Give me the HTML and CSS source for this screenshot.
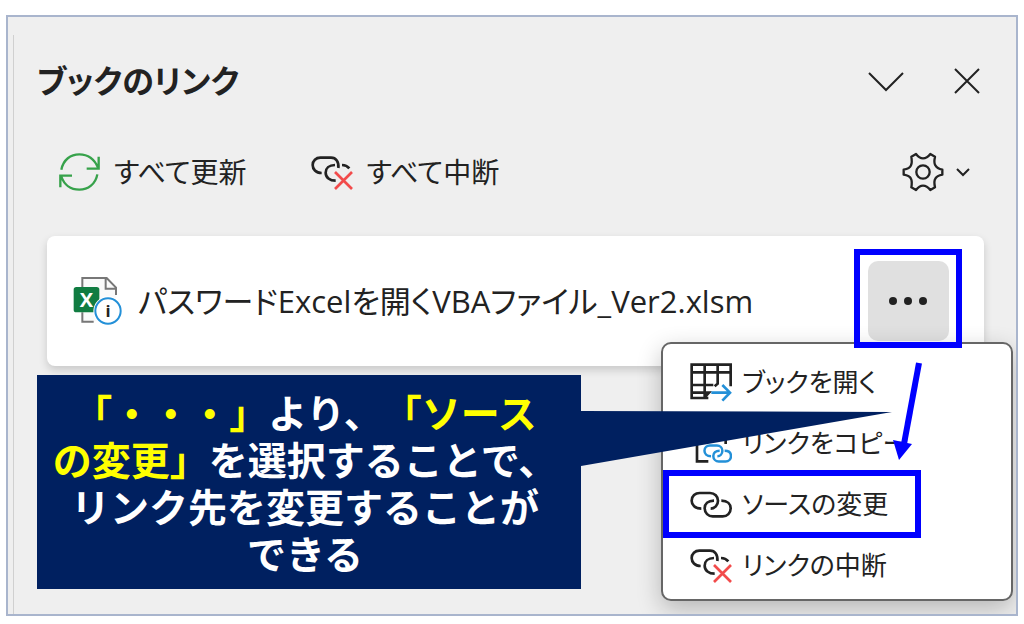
FILE: index.html
```html
<!DOCTYPE html>
<html lang="ja">
<head>
  <meta charset="utf-8">
  <meta name="viewport" content="width=device-width">
  <title>ブックのリンク</title>
  <link rel="stylesheet" href="styles.css">
</head>
<body>
<svg class="defs" aria-hidden="true">
  <symbol id="link-broken" viewBox="36 82 126 105">
    <path d="M68 136 C50 136 41 124 41 112 C41 99 51 90 64 90 H96 C111 90 120 102 118 121" fill="none" stroke="#222" stroke-width="8"/>
    <path d="M108 112 C90 112 80 122 80 135 C80 149 92 159 110 159" fill="none" stroke="#222" stroke-width="8"/>
    <path d="M129 112 Q143 112 151 122" fill="none" stroke="#222" stroke-width="8"/>
    <path d="M108 133 L159 184 M159 133 L108 184" fill="none" stroke="#f24b4b" stroke-width="8"/>
  </symbol>
  <g id="chain">
    <path d="M184 257 C165 257 155 246 155 233 C155 219 166 210 179 210 H210 C224 210 234 220 234 233 C234 247 224 257 212 257"/>
    <path d="M222 233 C204 233 194 243 194 256 C194 270 205 280 218 280 H248 C262 280 272 270 272 256 C272 243 263 233 244 233"/>
  </g>
</svg>

<div class="frame">
  <div class="pane">
    <header class="pane-head">
      <h1>ブックのリンク</h1>
      <button class="icon-btn" type="button" aria-label="折りたたむ">
        <svg width="36" height="36" viewBox="0 0 36 36"><path d="M1 10 L18 27 L35 10" fill="none" stroke="#222" stroke-width="2"/></svg>
      </button>
      <button class="icon-btn" type="button" aria-label="閉じる">
        <svg width="26" height="26" viewBox="0 0 26 26"><path d="M1 1 L25 25 M25 1 L1 25" fill="none" stroke="#222" stroke-width="2"/></svg>
      </button>
    </header>

    <div class="toolbar">
      <button class="tool" type="button">
        <svg width="42" height="40" viewBox="174 454 126 120">
          <path d="M184 507 C190 477 212 461 238 461 C266 461 284 477 294 501 M296 468 V504 H260" fill="none" stroke="#37a24b" stroke-width="7"/>
          <path d="M292 521 C287 550 264 567 238 567 C211 567 192 551 184 528 M181 560 V525 H216" fill="none" stroke="#37a24b" stroke-width="7"/>
        </svg>
        すべて更新
      </button>
      <button class="tool" type="button">
        <svg width="42" height="35"><use href="#link-broken"/></svg>
        すべて中断
      </button>
      <button class="tool settings" type="button" aria-label="設定">
        <svg width="42" height="40" viewBox="188 304 126 120">
          <path d="M193 357 Q211 354 215 344 Q219 336 216 318 L230 310 Q240 323 251 323 Q263 323 273 310 L287 318 Q283 336 288 344 Q293 354 309 357 V372 Q293 375 288 384 Q283 392 287 410 L273 418 Q263 405 251 405 Q240 405 230 418 L216 410 Q219 392 215 384 Q211 375 193 372 Z" fill="none" stroke="#222" stroke-width="7" stroke-linejoin="round"/>
          <circle cx="251" cy="364" r="20" fill="none" stroke="#222" stroke-width="7"/>
        </svg>
        <svg width="14" height="10" viewBox="0 0 14 10"><path d="M1 2 L7 8 L13 2" fill="none" stroke="#222" stroke-width="2"/></svg>
      </button>
    </div>

    <div class="card">
      <svg width="49" height="50" viewBox="100 141 147 150">
        <path d="M128 280 V147 H201 L229 176 V245 L162 280 Z" fill="#fafafa"/>
        <path d="M128 175 V147 H201 L229 176 V198 M198 147 V179 H229 M128 250 V278 H162" fill="none" stroke="#777" stroke-width="6"/>
        <rect x="102" y="174" width="77" height="76" rx="8" fill="#107c41"/>
        <text x="140" y="235" class="xl">X</text>
        <circle cx="205" cy="246" r="44" fill="#fff"/>
        <circle cx="205" cy="246" r="38" fill="#fff" stroke="#2390d8" stroke-width="6"/>
        <text x="205" y="264" class="info">i</text>
      </svg>
      <span class="file">パスワードExcelを開くVBAファイル_Ver2.xlsm</span>
      <div class="more-wrap">
        <button class="more" type="button" aria-label="その他のオプション">
          <svg width="40" height="8" viewBox="0 0 40 8"><circle cx="4" cy="4" r="4"/><circle cx="19" cy="4" r="4"/><circle cx="34" cy="4" r="4"/></svg>
        </button>
        <div class="menu">
          <button class="item" type="button">
            <svg width="42" height="39" viewBox="150 368 126 117">
              <path d="M205 473 H155 V373 H272 V438 M155 396 H272 M194 373 V470 M233 373 V430 L224 438 M155 434 H220 M155 457 H207 L192 473" fill="none" stroke="#222" stroke-width="8"/>
              <path d="M214 457 H270 M247 434 L270 457 L247 481" fill="none" stroke="#2390d8" stroke-width="8"/>
            </svg>
            ブックを開く
          </button>
          <button class="item" type="button">
            <svg width="42" height="40" viewBox="150 7 126 120">
              <path d="M205 122 H171 V14 H224 L257 47 V70 M222 14 V48 H257" fill="none" stroke="#222" stroke-width="8"/>
              <g transform="translate(88 -68) scale(.68)" fill="none" stroke="#2390d8" stroke-width="11"><use href="#chain"/></g>
            </svg>
            リンクをコピー
          </button>
          <button class="item marked" type="button">
            <svg width="42" height="27" viewBox="150 204 126 81" fill="none" stroke="#222" stroke-width="8"><use href="#chain"/></svg>
            ソースの変更
          </button>
          <button class="item" type="button">
            <svg width="42" height="35"><use href="#link-broken"/></svg>
            リンクの中断
          </button>
        </div>
        <svg class="arrow" width="30" height="100" viewBox="0 0 30 100">
          <path d="M26 1 L11 82" stroke="#00f" stroke-width="6"/>
          <path d="M0 78 L19 82 L6 98 Z" fill="#00f"/>
        </svg>
      </div>
    </div>

    <div class="callout">
      <p><em>「・・・」</em>より、<em>「ソース<br>の変更」</em>を選択することで、<br>リンク先を変更することが<br>できる</p>
      <svg class="pointer" width="311" height="56" viewBox="0 0 311 56"><path d="M0 0 L311 1 L0 55 Z" fill="#002060"/></svg>
    </div>
  </div>
</div>
</body>
</html>
```
FILE: styles.css
```css
*{
  margin: 0;
  padding: 0;
  box-sizing: border-box;
}
body{
  background: #fff;
  color: #222;
  font-family: "Open Sans", "Noto Sans CJK JP", sans-serif;
}
button{
  border: 0;
  background: none;
  color: inherit;
  font-family: inherit;
  font-feature-settings: inherit;
  cursor: pointer;
}
svg{
  display: block;
  flex: none;
}
.defs{
  position: absolute;
  width: 0;
  height: 0;
}
.frame{
  display: flex;
  min-height: calc(100vh - 23px);
  margin: 15px 6px 8px;
  padding: 18px 0 0 5px;
  border: 2px solid #a9b5cd;
  background: #efefef;
  overflow: hidden;
}
.pane{
  flex: 1;
  min-width: 0;
  border-left: 1px solid #d0d0d0;
  font-feature-settings: "palt"; /* かなを詰めて表示 */
}
.pane-head{
  display: flex;
  align-items: center;
  gap: 50px;
  height: 92px;
  padding: 0 36px 0 23px;
}
.pane-head h1{
  flex: 1;
  font-size: 32px;
  line-height: 48px;
}
.toolbar{
  display: flex;
  align-items: center;
  gap: 64px;
  height: 90px;
  padding: 0 46px 0 44px;
}
.tool{
  display: flex;
  align-items: center;
  gap: 14px;
  font-size: 28px;
  line-height: 40px;
}
.settings{
  gap: 12px;
  margin-left: auto;
}
.card{
  display: flex;
  align-items: center;
  gap: 16px;
  height: 130px;
  margin: 19px 32px 0 33px;
  padding: 0 35px 0 26px;
  border-radius: 8px;
  background: #fff;
  box-shadow: 0 4px 8px rgba(0,0,0,0.16);
}
.file{
  flex: 1;
  font-size: 31px;
  line-height: 48px;
  white-space: nowrap;
}
.xl{
  fill: #fff;
  font-size: 60px;
  font-weight: 700;
  text-anchor: middle;
}
.info{
  fill: #222;
  font-size: 50px;
  font-weight: 700;
  text-anchor: middle;
}

/* 「…」ボタンとメニュー */
.more-wrap{
  position: relative;
}
.more-wrap::after{
  content: "";
  position: absolute;
  z-index: 2;
  inset: -12px -13px -7px -14px;
  border: 6px solid #00f;
  pointer-events: none;
}
.more{
  display: flex;
  align-items: center;
  justify-content: center;
  width: 81px;
  height: 80px;
  border-radius: 10px;
  background: #e0e0e0;
  fill: #222;
}
.menu{
  position: absolute;
  z-index: 1;
  top: 81px;
  right: -64px;
  display: grid;
  gap: 1px;
  width: 352px;
  padding: 8px 0 4px;
  border: 2px solid #666;
  border-radius: 10px;
  background: #fff;
  box-shadow: 0 8px 24px rgba(0,0,0,0.24);
}
.item{
  position: relative;
  display: flex;
  align-items: center;
  gap: 10px;
  height: 60px;
  padding-left: 27px;
  font-size: 26px;
  line-height: 40px;
}
.marked::after{
  content: "";
  position: absolute;
  inset: -4px 90px -4px 0;
  border: 6px solid #00f;
}
.arrow{
  position: absolute;
  z-index: 4;
  top: 101px;
  left: 25px;
}

/* 吹き出し */
.callout{
  position: relative;
  z-index: 3;
  width: 544px;
  margin: 9px 0 24px 23px;
  padding: 16px 18px 10px 10px;
  background: #002060;
  color: #fff;
  font-size: 39px;
  font-weight: 700;
  line-height: 47px;
  text-align: center;
  white-space: nowrap;
  font-family: "Liberation Sans", "Noto Sans CJK JP", sans-serif;
  font-feature-settings: normal;
  text-spacing-trim: space-all;
}
.callout em{
  color: #ff0;
  font-style: normal;
}
.pointer{
  position: absolute;
  top: 36px;
  left: 100%;
}
```
